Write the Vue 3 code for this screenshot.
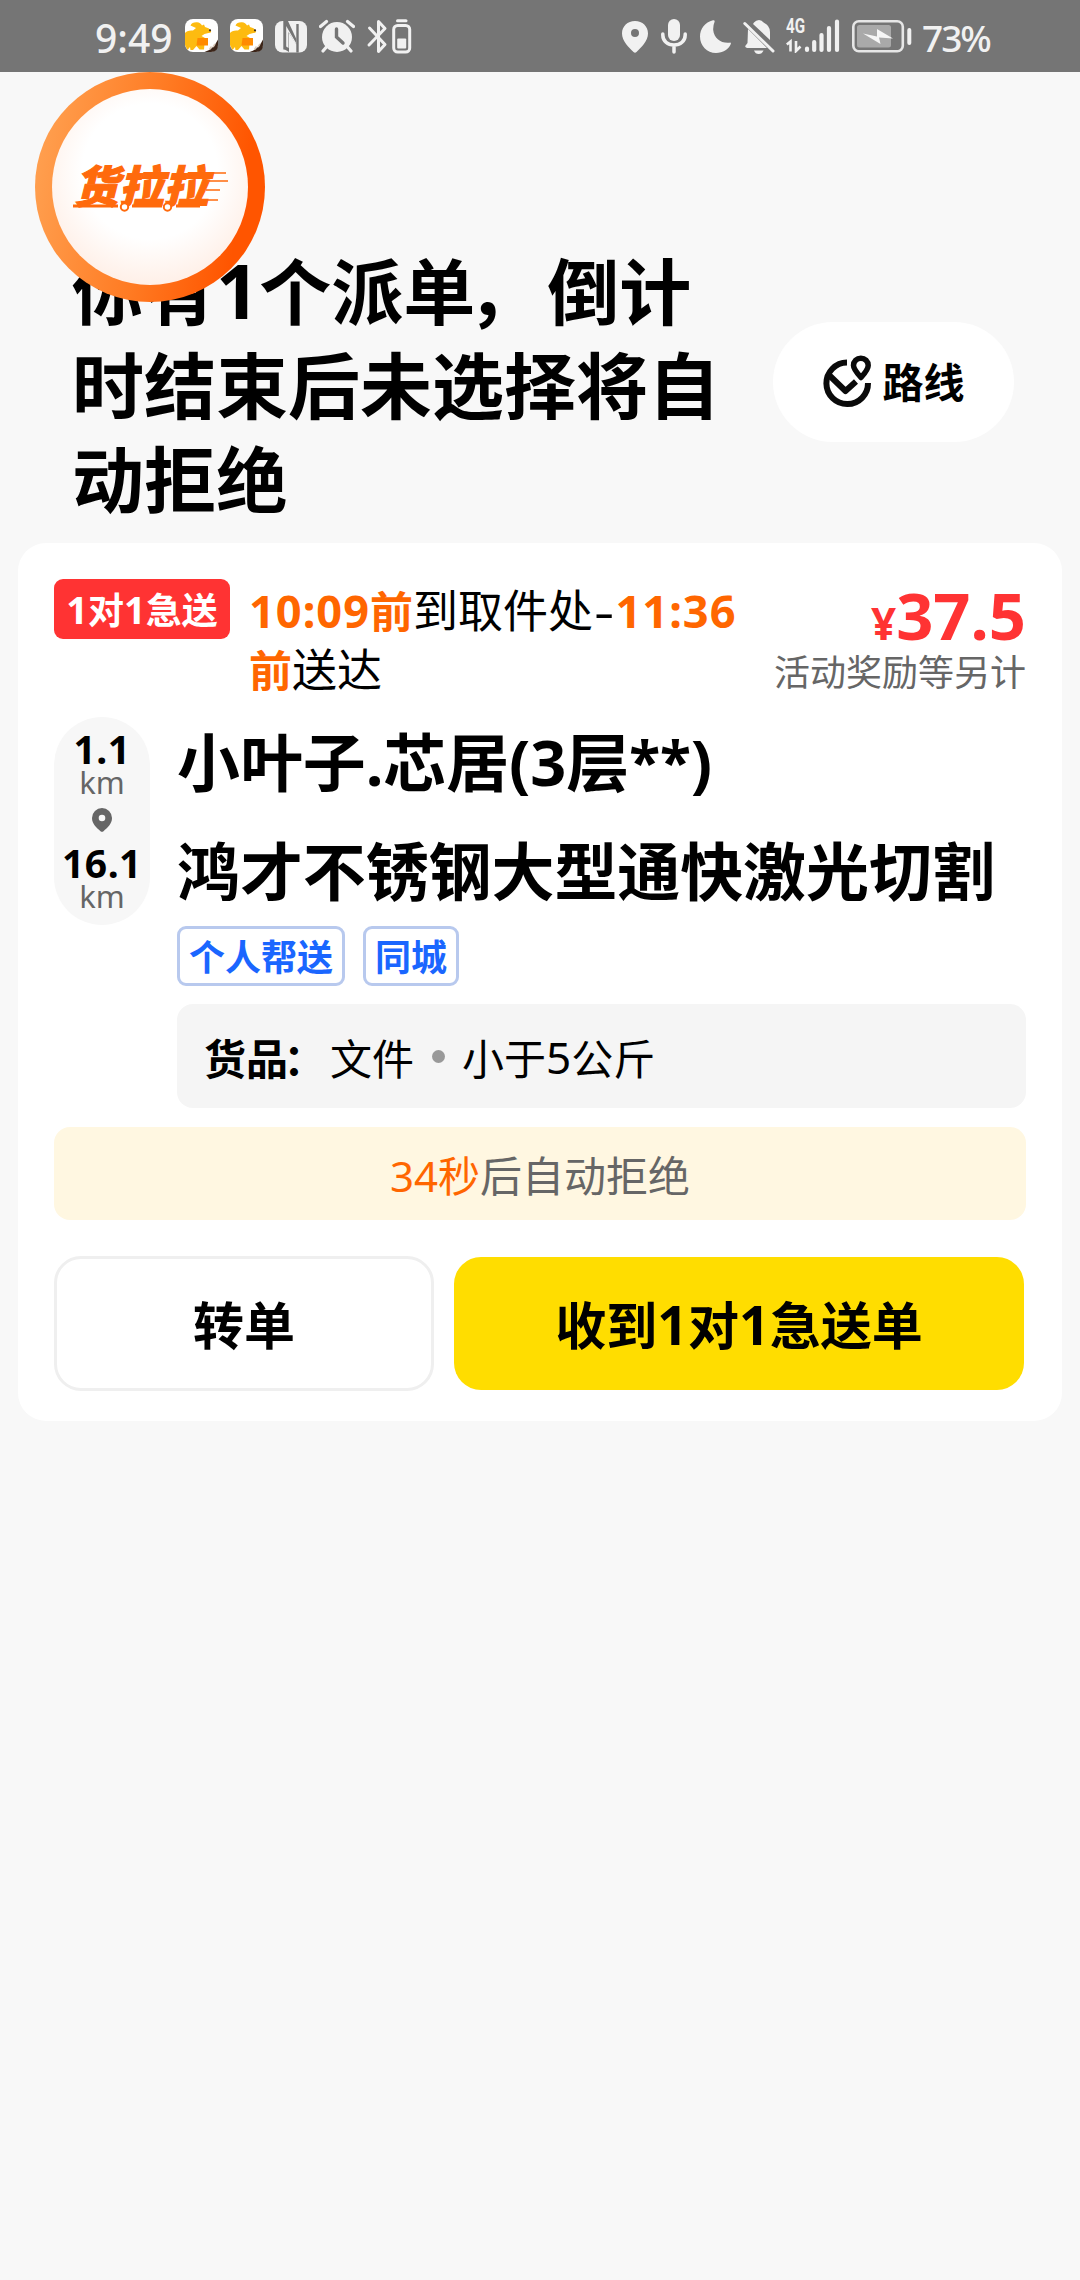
<script setup>
const riders = [1, 2]
const tags = ['个人帮送', '同城']
</script>

<template>
  <div class="screen">
    <header class="status">
      <div class="side">
        <span class="clock">9:49</span>
        <svg v-for="r in riders" :key="r" class="rider" viewBox="0 0 33 33" width="33" height="33">
          <rect width="33" height="33" rx="8" fill="#fff" />
          <path d="M0 14Q2 11 8 11.500L11 9L5.500 6.500Q7 3 12 3.300Q15.500 3.500 17 6.500L19 5.500L20 8Q24 8.500 26 11.500Q26.500 14 23.500 14Q19 14.500 16.500 17L20 19L19 30.500H14.500L11.500 27L8 31H5.500L5 28L2.500 31L0 26Z" fill="#fdbb10" />
          <path d="M12.500 19H23V26.500H11.500Z" fill="#ff8a00" />
          <circle cx="25" cy="11.300" r="1.100" fill="#3a2a1a" />
          <path d="M19.500 33Q28 31 33 20.500V26Q33 33 26 33Z" fill="#3c2519" />
          <path d="M24.500 30.500l2-3M28 28l2-3" stroke="#d9c8b8" stroke-width="1.500" />
        </svg>
        <svg class="nfc" viewBox="0 0 32 32" width="32" height="32">
          <rect width="32" height="31.500" rx="7.500" fill="#f1f1f1" />
          <path d="M9.500 0V28.500M22.500 3V31.500" stroke="#757575" stroke-width="2.400" fill="none" />
          <path d="M9.500 0L13 0L21.300 18V23.500L14 12V31L9 28Z" fill="#757575" />
          <path d="M11.200 5V25.500L13.500 27V11L20.800 23.500V21.500Z" fill="#f1f1f1" />
        </svg>
        <svg class="alarm" viewBox="0 0 36 34" width="36" height="34">
          <circle cx="18" cy="18" r="15" fill="#f1f1f1" />
          <path d="M1.500 7.500L7.500 2.500M34.500 7.500L28.500 2.500M4 32L7 28.500M32 32L29 28.500" stroke="#f1f1f1" stroke-width="3.200" stroke-linecap="round" />
          <path d="M17.500 10V18L24 24" fill="none" stroke="#757575" stroke-width="3.400" stroke-linecap="round" />
        </svg>
        <svg class="bt" viewBox="0 0 46 35" width="46" height="35">
          <g fill="none" stroke="#f1f1f1" stroke-width="3" stroke-linejoin="round" stroke-linecap="round">
            <path d="M3.500 9L19 25.500L12.500 32.500V2.500L19 9.500L3 26" />
            <rect x="27.700" y="6.500" width="16" height="26.500" rx="4" />
            <path d="M31.500 1.800H40" />
          </g>
          <rect x="31.200" y="19.500" width="9" height="10" rx="1" fill="#f1f1f1" />
        </svg>
      </div>
      <div class="side">
        <svg class="pin" viewBox="0 0 26 32" width="26" height="32">
          <path fill-rule="evenodd" d="M13 0C5.500 0 0 5.400 0 12.400C0 20 7 26.500 11.500 31Q13 32.300 14.500 31C19 26.500 26 20 26 12.400C26 5.400 20.500 0 13 0ZM13 8A4 4 0 1 1 13 16A4 4 0 0 1 13 8Z" fill="#f1f1f1" />
        </svg>
        <svg class="mic" viewBox="0 0 26 35" width="26" height="35">
          <rect x="7" y="0" width="12" height="22" rx="6" fill="#f1f1f1" />
          <path d="M1.800 15V16C1.800 22 6.500 26 13 26S24.200 22 24.200 16V15M13 26V33" fill="none" stroke="#f1f1f1" stroke-width="3.500" stroke-linecap="round" />
        </svg>
        <svg class="moon" viewBox="0 0 31 33" width="31" height="33">
          <path d="M13 .3C5 2 0 9 0 16.500C0 25.800 7 33 16 33C23 33 28.500 29.500 30.800 24Q31.300 22.300 29.500 22.700C21 23.500 14 18.500 13.200 10Q13 5.500 14.600 1.700Q15 0 13 .3Z" fill="#f1f1f1" />
        </svg>
        <svg class="bell" viewBox="0 0 32 34" width="32" height="34">
          <path d="M11 2.500Q13 0 16 0Q19 0 20.500 2.500Q27 5.500 27 12V20L10 4ZM5 9L24 28H4Q1 27 3 25L4.500 23Z" fill="#f1f1f1" />
          <path d="M1.800 3.500L30 31" stroke="#f1f1f1" stroke-width="3" stroke-linecap="round" />
          <path d="M11 30.500H20.500Q19 34 15.700 34T11 30.500Z" fill="#f1f1f1" />
        </svg>
        <div class="network">
          <span class="gen">4G</span>
          <svg viewBox="0 0 54 34" width="54" height="34">
            <path d="M.8 25.500L4.500 22.500V32.500M10 22V32L14.500 27.500" fill="none" stroke="#f1f1f1" stroke-width="2.600" />
            <path d="M21 29.500V31M28.200 23V31M35.500 16V31M43 9V31M51 2.500V31" stroke="#f1f1f1" stroke-width="4.200" stroke-linecap="round" />
          </svg>
        </div>
        <svg class="battery" viewBox="0 0 60 33" width="60" height="33">
          <rect x="1.300" y="1.300" width="49.500" height="30" rx="5.500" fill="none" stroke="#e6e6e6" stroke-width="2.600" />
          <rect x="5" y="5" width="34" height="22.500" rx="2.500" fill="#a9a9a9" />
          <path d="M11 13.500L25 16.500V9L41 18.500L27 17.500L28.500 24L11 13.500Z" fill="#f6f6f6" />
          <rect x="55.300" y="8" width="4" height="17" rx="2" fill="#f1f1f1" />
        </svg>
        <span class="percent">73%</span>
      </div>
    </header>

    <div class="bubble">
      <div class="bubble-face">
        <svg viewBox="0 0 196 196" width="196" height="196">
          <g transform="translate(22 113.500) skewX(-14)">
            <text x="0" y="0" class="brand" textLength="134" lengthAdjust="spacingAndGlyphs">货拉拉</text>
          </g>
          <g stroke="#ff6a0c" fill="none">
            <path d="M21 117H66M80 117H110M124 117H148" stroke-width="3.200" />
            <path d="M160 84H174" stroke-width="1.500" />
            <path d="M157 92H176" stroke-width="1.500" />
            <path d="M154 101H168" stroke-width="1.500" />
            <path d="M151 111H166" stroke-width="1.500" />
            <circle cx="72.500" cy="118" r="3.700" stroke-width="2" fill="#fff" />
            <circle cx="115.500" cy="118" r="3.700" stroke-width="2" fill="#fff" />
          </g>
        </svg>
      </div>
    </div>

    <section class="heading">
      <h1>
        <span>你有<i>1</i>个派单<u>，</u>倒计</span>
        <span>时结束后未选择将自</span>
        <span>动拒绝</span>
      </h1>
      <button class="route">
        <svg viewBox="0 0 50 54" width="50" height="54">
          <g fill="none" stroke="#0a0a0a" stroke-width="6">
            <path d="M24 7.500A20.800 20.800 0 1 0 45 28" />
            <path d="M6.500 20.500L22.500 36L33 26.500" stroke-linejoin="round" />
            <path d="M38 22.500C33.500 17.500 30.500 14 30.500 10.500A7.300 7.300 0 0 1 45.200 10.500C45.200 14 42.500 17.500 38 22.500Z" stroke-width="5.500" stroke-linejoin="round" />
          </g>
        </svg>
        <span>路线</span>
      </button>
    </section>

    <main class="card">
      <div class="top">
        <span class="badge"><i>1</i>对<i>1</i>急送</span>
        <p class="times">
          <span><b><i>10:09</i>前</b>到取件处<em>-</em><b><i>11:36</i></b></span>
          <span><b>前</b>送达</span>
        </p>
        <div class="pay">
          <div class="price"><small>¥</small>37.5</div>
          <div class="note">活动奖励等另计</div>
        </div>
      </div>

      <div class="trip">
        <div class="distance">
          <strong>1.1</strong>
          <span>km</span>
          <svg viewBox="0 0 20 24" width="20" height="24">
            <path fill-rule="evenodd" d="M10 0A10 10 0 0 0 0 10C0 16 4.500 19.500 8.500 23.200Q10 24.500 11.500 23.200C15.500 19.500 20 16 20 10A10 10 0 0 0 10 0ZM10 6.700A3.300 3.300 0 1 1 10 13.300A3.300 3.300 0 0 1 10 6.700Z" fill="#666" />
          </svg>
          <strong>16.1</strong>
          <span>km</span>
        </div>
        <div class="places">
          <h2>小叶子.芯居(3层<span class="mask">**</span>)</h2>
          <h2>鸿才不锈钢大型通快激光切割</h2>
          <div class="tags">
            <span v-for="t in tags" :key="t">{{ t }}</span>
          </div>
          <div class="goods"><b>货品<u>：</u></b>文件<span class="dot"></span>小于<i>5</i>公斤</div>
        </div>
      </div>

      <div class="countdown"><span>34秒</span>后自动拒绝</div>

      <div class="actions">
        <button class="transfer">转单</button>
        <button class="accept">收到<i>1</i>对<i>1</i>急送单</button>
      </div>
    </main>
  </div>
</template>

<style>
body {
  margin: 0;
  background: #f8f8f8;
}
</style>

<style scoped>
* {
  box-sizing: border-box;
}
.screen {
  position: relative;
  width: 1080px;
  height: 2280px;
  overflow: hidden;
  background: #f8f8f8;
  color: #000;
  font-family: "Noto Sans", "Noto Sans CJK SC", sans-serif;
  white-space: nowrap;
}
h1, h2, p {
  margin: 0;
}
svg {
  display: block;
  flex: none;
}
i {
  font-style: normal;
  font-size: 1.05em;
  line-height: 0;
}
/* full-width punctuation sits tight against the preceding character */
u {
  text-decoration: none;
  margin: 0 .11em 0 -.11em;
}
button {
  font-family: inherit;
  color: #000;
  border: 0;
  padding: 0;
}

.status {
  display: flex;
  justify-content: space-between;
  height: 72px;
  padding: 0 90px 0 95px;
  background: #757575;
  color: #f1f1f1;
}
.side {
  display: flex;
  align-items: flex-start;
}
.clock {
  width: 90px;
  padding-top: 2px;
  font-size: 39px;
  line-height: 72px;
  font-weight: 500;
}
.rider {
  margin: 19px 12px 0 0;
}
.nfc {
  margin: 21px 12px 0 0;
}
.alarm {
  margin: 19px 11px 0 0;
}
.bt {
  margin-top: 19px;
}
.pin {
  margin: 21px 13px 0 0;
}
.mic {
  margin: 19px 13px 0 0;
}
.moon {
  margin: 20px 12px 0 0;
}
.bell {
  margin: 20px 11px 0 0;
}
.network {
  position: relative;
  margin: 19px 12px 0 0;
}
.gen {
  position: absolute;
  left: 0;
  top: -1px;
  font-family: Roboto, sans-serif;
  font-size: 20px;
  line-height: 17px;
  font-weight: 700;
  transform: scaleX(.76);
  transform-origin: left;
}
.battery {
  margin: 20px 10px 0 0;
}
.percent {
  width: 68px;
  font-size: 37px;
  line-height: 75px;
  font-weight: 500;
  letter-spacing: -2px;
}

.bubble {
  position: absolute;
  z-index: 2;
  left: 35px;
  top: 72px;
  width: 230px;
  height: 230px;
  padding: 17px;
  border-radius: 50%;
  background: linear-gradient(100deg, #ffa050 5%, #ff7a22 50%, #ff5500 85%);
}
.bubble-face {
  width: 196px;
  height: 196px;
  border-radius: 50%;
  background: radial-gradient(circle at 50% 42%, #fff 45%, #fff0e8 75%, #ffe2d2 100%);
}
.brand {
  font-family: "Noto Sans CJK SC", sans-serif;
  font-weight: 900;
  font-size: 44px;
  fill: #ff6a0c;
  stroke: #ff6a0c;
  stroke-width: 1.2px;
}

.heading {
  display: flex;
  justify-content: space-between;
  padding: 172px 66px 0 72px;
}
h1 {
  font-size: 72px;
  line-height: 94px;
  font-weight: 700;
}
h1 span {
  display: block;
}
.route {
  display: flex;
  align-items: center;
  justify-content: center;
  gap: 10px;
  width: 241px;
  height: 120px;
  margin-top: 78px;
  border-radius: 60px;
  background: #fff;
  font-size: 41px;
  line-height: 60px;
  font-weight: 700;
}

.card {
  width: 1044px;
  height: 878px;
  margin: 17px auto 0;
  padding: 36px 36px 30px;
  border-radius: 28px;
  background: #fff;
}
.top {
  display: flex;
  height: 138px;
}
.badge {
  width: 176px;
  height: 60px;
  padding-top: 3px;
  border-radius: 9px;
  background: #f33;
  color: #fff;
  font-size: 36px;
  line-height: 58px;
  font-weight: 700;
  text-align: center;
}
.times {
  padding: 2px 0 0 19px;
  font-size: 45px;
  line-height: 59px;
}
.times > span {
  display: block;
}
.times b {
  color: #f60;
  font-size: 43px;
  line-height: 0;
}
.times i {
  letter-spacing: 1px;
}
.times em {
  display: inline-block;
  font-style: normal;
  line-height: 1;
  padding: 0 4px;
  transform: scaleX(1.4);
}
.pay {
  margin-left: auto;
  text-align: right;
}
.price {
  height: 67px;
  color: #f33;
  font-size: 65px;
  line-height: 73px;
  font-weight: 700;
}
.price small {
  font-size: 44px;
  line-height: 0;
}
.note {
  color: #666;
  font-size: 36px;
  line-height: 54px;
}

.trip {
  display: flex;
  align-items: flex-start;
}
.distance {
  display: flex;
  flex-direction: column;
  align-items: center;
  width: 96px;
  height: 208px;
  margin-right: 27px;
  padding-top: 14px;
  border-radius: 48px;
  background: #f7f7f7;
}
.distance strong {
  font-size: 39px;
  line-height: 36px;
  font-weight: 700;
  letter-spacing: .5px;
}
.distance span {
  color: #666;
  font-size: 31px;
  line-height: 30px;
}
.distance svg {
  margin: 11px 0 13px;
}
.places {
  flex: 1;
  padding-top: 3px;
}
h2 {
  margin-bottom: 26px;
  font-size: 63px;
  line-height: 83px;
  font-weight: 700;
  letter-spacing: -.1px;
}
h2 + h2 {
  margin-bottom: 14px;
}
.mask {
  font-size: 57px;
  line-height: 0;
  vertical-align: 3px;
}
.tags {
  display: flex;
  gap: 18px;
}
.tags span {
  height: 60px;
  padding: 2px 9px 0;
  border: 3px solid #b8c9ee;
  border-radius: 9px;
  color: #1a66ff;
  font-size: 36px;
  line-height: 54px;
  font-weight: 700;
}
.goods {
  display: flex;
  align-items: center;
  height: 104px;
  margin-top: 18px;
  padding: 1px 27px 0;
  border-radius: 16px;
  background: #f5f5f5;
  font-size: 42px;
}
.dot {
  width: 13px;
  height: 13px;
  margin: 0 17px 0 18px;
  border-radius: 50%;
  background: #999;
}
.countdown {
  height: 93px;
  margin-top: 19px;
  padding-top: 2px;
  border-radius: 16px;
  background: #fff7e1;
  color: #666;
  font-size: 42px;
  line-height: 93px;
  text-align: center;
}
.countdown span {
  color: #f60;
}
.actions {
  display: flex;
  align-items: center;
  gap: 20px;
  margin-top: 36px;
}
.actions button {
  height: 135px;
  padding-top: 3px;
  border-radius: 27px;
  font-size: 51px;
  line-height: 1;
  font-weight: 700;
}
.transfer {
  width: 380px;
  border: 3px solid #efefef !important;
  background: #fff;
}
.actions .accept {
  width: 570px;
  height: 133px;
  background: #fd0;
}
</style>
